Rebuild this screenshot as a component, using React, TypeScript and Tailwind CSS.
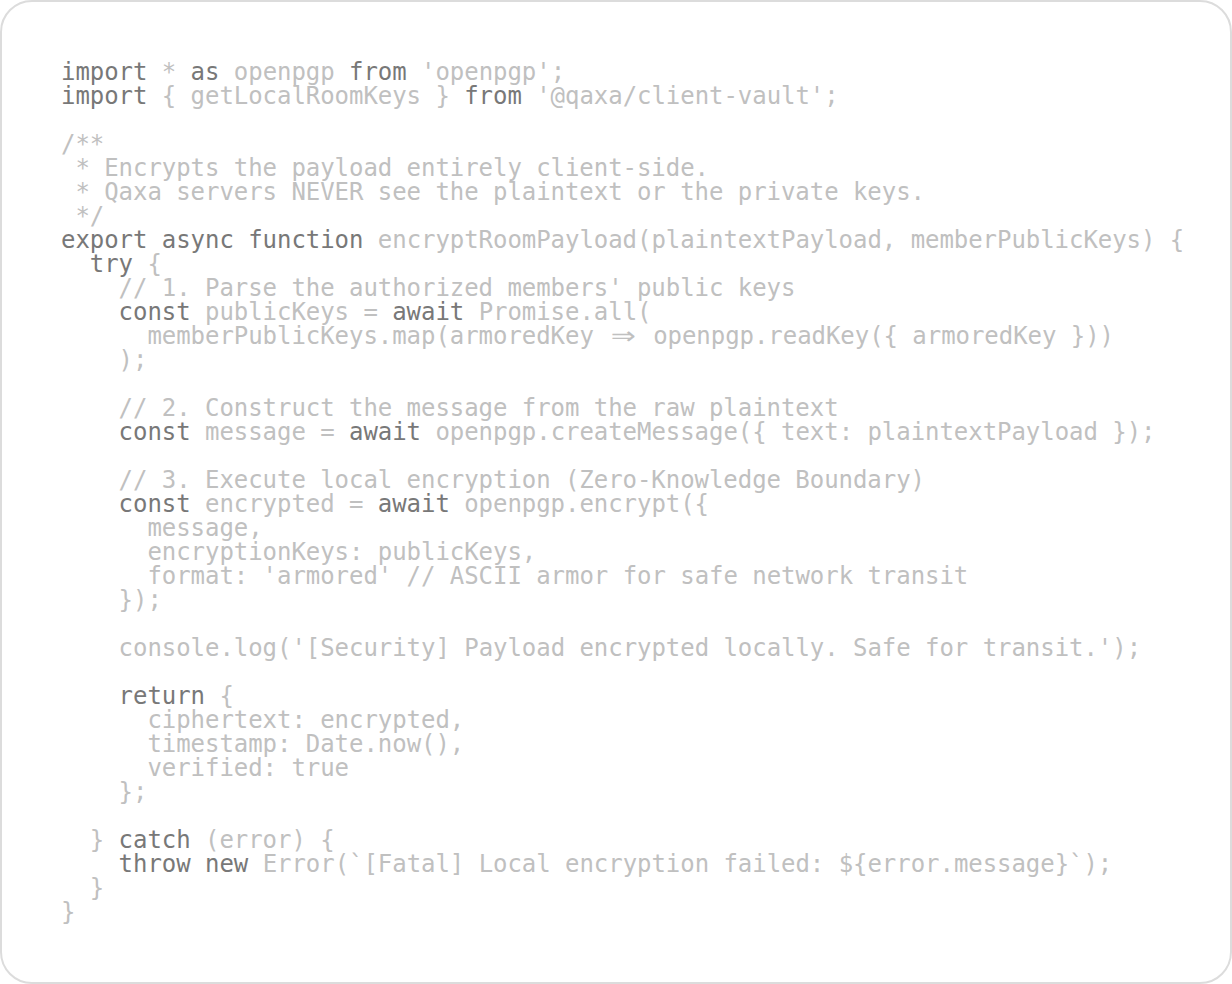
const code = `import * as openpgp from 'openpgp';
import { getLocalRoomKeys } from '@qaxa/client-vault';

/**
 * Encrypts the payload entirely client-side.
 * Qaxa servers NEVER see the plaintext or the private keys.
 */
export async function encryptRoomPayload(plaintextPayload, memberPublicKeys) {
  try {
    // 1. Parse the authorized members' public keys
    const publicKeys = await Promise.all(
      memberPublicKeys.map(armoredKey => openpgp.readKey({ armoredKey }))
    );

    // 2. Construct the message from the raw plaintext
    const message = await openpgp.createMessage({ text: plaintextPayload });

    // 3. Execute local encryption (Zero-Knowledge Boundary)
    const encrypted = await openpgp.encrypt({
      message,
      encryptionKeys: publicKeys,
      format: 'armored' // ASCII armor for safe network transit
    });

    console.log('[Security] Payload encrypted locally. Safe for transit.');

    return {
      ciphertext: encrypted,
      timestamp: Date.now(),
      verified: true
    };

  } catch (error) {
    throw new Error(\`[Fatal] Local encryption failed: \${error.message}\`);
  }
}`

const keywords = new Set([
  'import', 'as', 'from', 'export', 'async', 'function', 'try',
  'const', 'await', 'return', 'catch', 'throw', 'new',
])

function Line({ text }: { text: string }) {
  const trimmed = text.trim()
  const isComment = trimmed.startsWith('//') || trimmed.startsWith('/*') || trimmed.startsWith('*')
  if (isComment) return <div className="h-6 text-[#c0c0c0]">{text}</div>

  const parts = text.split(/(\b\w+\b|=>)/)
  return (
    <div className="h-6 text-[#c0c0c0]">
      {parts.map((part, i) => {
        if (part === '=>')
          return (
            <span
              key={i}
              className="inline-block w-[2ch] text-center font-['DejaVu_Sans',sans-serif] scale-x-125"
            >
              ⇒
            </span>
          )
        if (keywords.has(part))
          return (
            <span key={i} className="text-[#787878]">
              {part}
            </span>
          )
        return <span key={i}>{part}</span>
      })}
    </div>
  )
}

export default function App() {
  return (
    <div className="w-[1232px] h-[984px] bg-white">
      <div className="w-full h-full border-2 border-[#dcdcdc] rounded-[32px] bg-white pl-[59px] pt-[58px]">
        <pre className="font-['DejaVu_Sans_Mono',monospace] text-[24px] leading-6 tracking-[-0.05px] whitespace-pre">
          {code.split('\n').map((line, i) => (
            <Line key={i} text={line} />
          ))}
        </pre>
      </div>
    </div>
  )
}
